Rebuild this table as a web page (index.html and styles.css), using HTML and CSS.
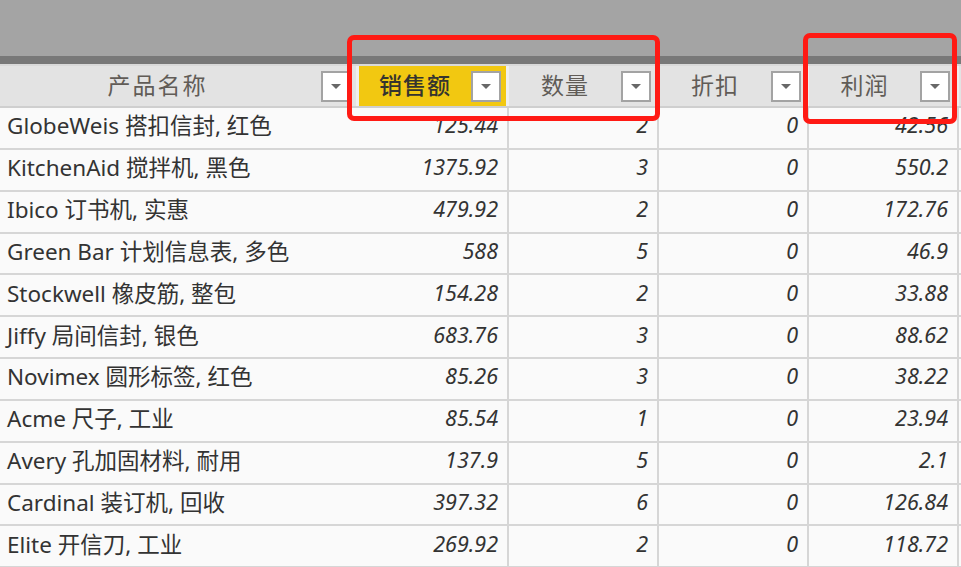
FILE: index.html
```html
<!DOCTYPE html>
<html lang="zh">
<head>
<meta charset="utf-8">
<link rel="stylesheet" href="styles.css">
</head>
<body>
<div class="page">
  <div class="topband"></div>
  <div class="darkband"></div>
  <div class="table">
    <div class="hrow">
      <div class="hcell c1"><span class="hlabel">产品名称</span><span class="dd"></span></div>
      <div class="hcell c2 active"><span class="hlabel">销售额</span><span class="dd"></span></div>
      <div class="hcell c3"><span class="hlabel">数量</span><span class="dd"></span></div>
      <div class="hcell c4"><span class="hlabel">折扣</span><span class="dd"></span></div>
      <div class="hcell c5"><span class="hlabel">利润</span><span class="dd"></span></div>
    </div>
    <div class="row"><div class="cell c1 name">GlobeWeis 搭扣信封, 红色</div><div class="cell c2 num">125.44</div><div class="cell c3 num">2</div><div class="cell c4 num">0</div><div class="cell c5 num">42.56</div></div>
    <div class="row"><div class="cell c1 name">KitchenAid 搅拌机, 黑色</div><div class="cell c2 num">1375.92</div><div class="cell c3 num">3</div><div class="cell c4 num">0</div><div class="cell c5 num">550.2</div></div>
    <div class="row"><div class="cell c1 name">Ibico 订书机, 实惠</div><div class="cell c2 num">479.92</div><div class="cell c3 num">2</div><div class="cell c4 num">0</div><div class="cell c5 num">172.76</div></div>
    <div class="row"><div class="cell c1 name">Green Bar 计划信息表, 多色</div><div class="cell c2 num">588</div><div class="cell c3 num">5</div><div class="cell c4 num">0</div><div class="cell c5 num">46.9</div></div>
    <div class="row"><div class="cell c1 name">Stockwell 橡皮筋, 整包</div><div class="cell c2 num">154.28</div><div class="cell c3 num">2</div><div class="cell c4 num">0</div><div class="cell c5 num">33.88</div></div>
    <div class="row"><div class="cell c1 name">Jiffy 局间信封, 银色</div><div class="cell c2 num">683.76</div><div class="cell c3 num">3</div><div class="cell c4 num">0</div><div class="cell c5 num">88.62</div></div>
    <div class="row"><div class="cell c1 name">Novimex 圆形标签, 红色</div><div class="cell c2 num">85.26</div><div class="cell c3 num">3</div><div class="cell c4 num">0</div><div class="cell c5 num">38.22</div></div>
    <div class="row"><div class="cell c1 name">Acme 尺子, 工业</div><div class="cell c2 num">85.54</div><div class="cell c3 num">1</div><div class="cell c4 num">0</div><div class="cell c5 num">23.94</div></div>
    <div class="row"><div class="cell c1 name">Avery 孔加固材料, 耐用</div><div class="cell c2 num">137.9</div><div class="cell c3 num">5</div><div class="cell c4 num">0</div><div class="cell c5 num">2.1</div></div>
    <div class="row"><div class="cell c1 name">Cardinal 装订机, 回收</div><div class="cell c2 num">397.32</div><div class="cell c3 num">6</div><div class="cell c4 num">0</div><div class="cell c5 num">126.84</div></div>
    <div class="row"><div class="cell c1 name">Elite 开信刀, 工业</div><div class="cell c2 num">269.92</div><div class="cell c3 num">2</div><div class="cell c4 num">0</div><div class="cell c5 num">118.72</div></div>
  </div>
  <div class="mark mark-a"></div>
  <div class="mark mark-b"></div>
</div>
</body>
</html>
```
FILE: styles.css
```css
html, body {
  margin: 0;
  padding: 0;
  background: #fafafa;
}
.page {
  position: relative;
  width: 961px;
  height: 567px;
  overflow: hidden;
  font-family: "Noto Sans", "Noto Sans CJK SC", sans-serif;
}
.topband {
  height: 56px;
  background: #a4a4a4;
}
.darkband {
  height: 8px;
  background: #787878;
}
.table {
  width: 1000px;
  border-top: 2px solid #d9d9d9;
}
.hrow {
  display: flex;
  height: 40px;
  background: #e3e3e3;
  border-bottom: 2px solid #cfcfcf;
}
.row {
  display: flex;
  height: 41.85px;
  box-sizing: border-box;
  border-bottom: 2px solid #d6d6d6;
  background: #fafafa;
}
.c1 { width: 359px; }
.c2, .c3, .c4, .c5 { width: 150px; }
.hcell, .cell {
  box-sizing: border-box;
  flex: none;
}
.hcell {
  display: flex;
  align-items: center;
  border-right: 3px solid #efefef;
  padding-right: 5px;
}
.hcell.c1 { padding-right: 5px; }
.hcell.c5 { padding-right: 6px; }
.hcell.active {
  background: #f2c811;
}
.hlabel {
  flex: 1;
  text-align: center;
  font-family: "Noto Sans CJK SC", sans-serif;
  font-size: 23px;
  letter-spacing: 1px;
  color: #615c57;
  margin-top: -4px;
}
.hcell.c1 .hlabel { letter-spacing: 2px; padding-right: 6px; }
.active .hlabel {
  color: #35342f;
  font-weight: 500;
}
.dd {
  position: relative;
  width: 30px;
  height: 31px;
  box-sizing: border-box;
  border: 2px solid #a3a3a3;
  background: #ffffff;
  flex: none;
}
.dd::after {
  content: "";
  position: absolute;
  left: 8px;
  top: 11px;
  border-left: 5px solid transparent;
  border-right: 5px solid transparent;
  border-top: 5px solid #686868;
}
.cell {
  display: flex;
  align-items: center;
  border-right: 2px solid #d6d6d6;
  font-size: 22.5px;
  color: #333333;
  white-space: nowrap;
  padding-bottom: 6px;
}
.cell.c1 {
  border-right-color: transparent;
}
.name {
  padding-left: 7px;
}
.num {
  justify-content: flex-end;
  padding-right: 9px;
  font-style: italic;
  font-size: 21.5px;
}
.mark {
  position: absolute;
  border: 5px solid #ff1a14;
  border-radius: 7px;
  box-sizing: border-box;
}
.mark-a {
  left: 347px;
  top: 35px;
  width: 313px;
  height: 86px;
}
.mark-b {
  left: 803px;
  top: 33px;
  width: 154px;
  height: 91px;
}
```
